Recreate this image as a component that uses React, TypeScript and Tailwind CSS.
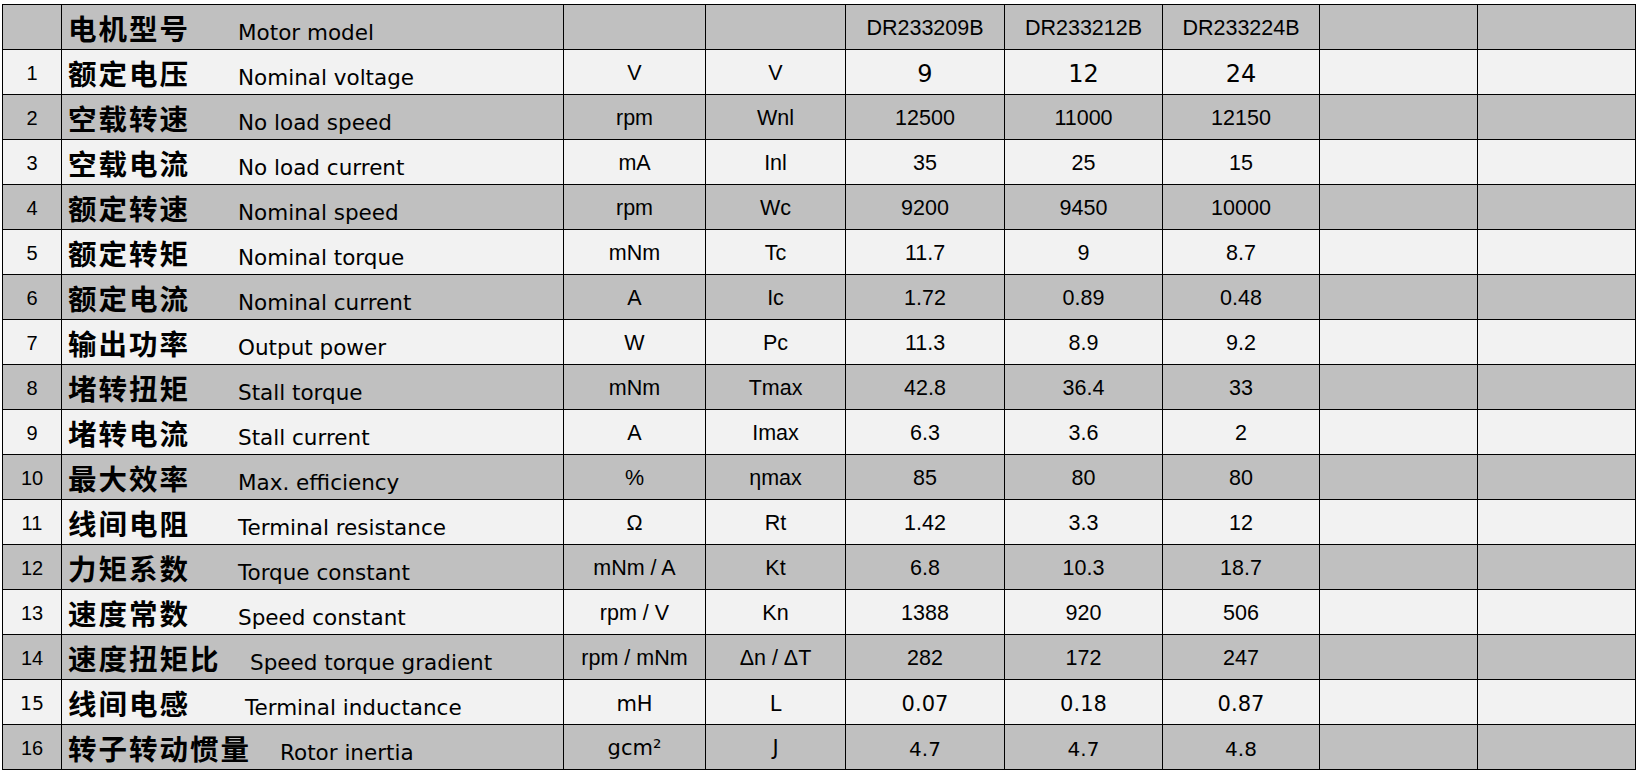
const arial = "font-['Liberation_Sans',Arial,sans-serif]";
const verdana = "font-['DejaVu_Sans',Verdana,sans-serif]";
const cjk = "font-['Noto_Sans_CJK_SC','Noto_Sans_CJK_JP',sans-serif]";

type Row = {
  n: string;
  zh: string;
  en: string;
  zhW: string;
  unit: string;
  sym: string;
  v: string[];
  numFont?: string;
  cellFont?: string;
  valFont?: string;
};

const dataRows: Row[] = [
  { n: '1', zh: '额定电压', en: 'Nominal voltage', zhW: 'w-[170px]', unit: 'V', sym: 'V', v: ['9', '12', '24'], valFont: `${verdana} text-[24px] pt-[4px]` },
  { n: '2', zh: '空载转速', en: 'No load speed', zhW: 'w-[170px]', unit: 'rpm', sym: 'Wnl', v: ['12500', '11000', '12150'] },
  { n: '3', zh: '空载电流', en: 'No load current', zhW: 'w-[170px]', unit: 'mA', sym: 'Inl', v: ['35', '25', '15'] },
  { n: '4', zh: '额定转速', en: 'Nominal speed', zhW: 'w-[170px]', unit: 'rpm', sym: 'Wc', v: ['9200', '9450', '10000'] },
  { n: '5', zh: '额定转矩', en: 'Nominal torque', zhW: 'w-[170px]', unit: 'mNm', sym: 'Tc', v: ['11.7', '9', '8.7'] },
  { n: '6', zh: '额定电流', en: 'Nominal current', zhW: 'w-[170px]', unit: 'A', sym: 'Ic', v: ['1.72', '0.89', '0.48'] },
  { n: '7', zh: '输出功率', en: 'Output power', zhW: 'w-[170px]', unit: 'W', sym: 'Pc', v: ['11.3', '8.9', '9.2'] },
  { n: '8', zh: '堵转扭矩', en: 'Stall torque', zhW: 'w-[170px]', unit: 'mNm', sym: 'Tmax', v: ['42.8', '36.4', '33'] },
  { n: '9', zh: '堵转电流', en: 'Stall current', zhW: 'w-[170px]', unit: 'A', sym: 'Imax', v: ['6.3', '3.6', '2'] },
  { n: '10', zh: '最大效率', en: 'Max. efficiency', zhW: 'w-[170px]', unit: '%', sym: 'ηmax', v: ['85', '80', '80'] },
  { n: '11', zh: '线间电阻', en: 'Terminal resistance', zhW: 'w-[170px]', unit: 'Ω', sym: 'Rt', v: ['1.42', '3.3', '12'] },
  { n: '12', zh: '力矩系数', en: 'Torque constant', zhW: 'w-[170px]', unit: 'mNm / A', sym: 'Kt', v: ['6.8', '10.3', '18.7'] },
  { n: '13', zh: '速度常数', en: 'Speed constant', zhW: 'w-[170px]', unit: 'rpm / V', sym: 'Kn', v: ['1388', '920', '506'] },
  { n: '14', zh: '速度扭矩比', en: 'Speed torque gradient', zhW: 'w-[182px]', unit: 'rpm / mNm', sym: 'Δn / ΔT', v: ['282', '172', '247'] },
  {
    n: '15', zh: '线间电感', en: 'Terminal inductance', zhW: 'w-[177px]', unit: 'mH', sym: 'L', v: ['0.07', '0.18', '0.87'],
    numFont: `${verdana} text-[19px] pt-[3px]`, cellFont: `${verdana} text-[21px] pt-[5px]`, valFont: `${verdana} text-[21px] pt-[5px]`,
  },
  {
    n: '16', zh: '转子转动惯量', en: 'Rotor inertia', zhW: 'w-[212px]', unit: 'gcm²', sym: 'J', v: ['4.7', '4.7', '4.8'],
    cellFont: `${verdana} text-[21px] pt-[4px]`, valFont: `${verdana} text-[20px] pt-[4px]`,
  },
];

const cell = 'flex items-center justify-center text-black';

function Label({ zh, en, zhW }: { zh: string; en: string; zhW: string }) {
  return (
    <div className="flex flex-1 items-center pl-[6px] pt-[2px] text-black">
      <span className={`${cjk} ${zhW} shrink-0 text-[28.5px] font-bold leading-none tracking-[2px]`}>{zh}</span>
      <span className={`${verdana} mt-[10px] whitespace-nowrap text-[21.5px] leading-none`}>{en}</span>
    </div>
  );
}

function HeaderRow() {
  const bg = 'bg-[#c0c0c0]';
  return (
    <>
      <div className={bg} />
      <div className={`${bg} flex`}>
        <Label zh="电机型号" en="Motor model" zhW="w-[170px]" />
      </div>
      <div className={bg} />
      <div className={bg} />
      {['DR233209B', 'DR233212B', 'DR233224B'].map((m) => (
        <div key={m} className={`${bg} ${cell} ${arial} pt-[2px] text-[21.5px]`}>{m}</div>
      ))}
      <div className={bg} />
      <div className={bg} />
    </>
  );
}

export default function App() {
  return (
    <div className="min-h-screen bg-white pl-[2px] pt-[4px]">
      <div className="grid w-[1634px] grid-cols-[58px_501px_141px_139px_158px_157px_156px_157px_157px] auto-rows-[44px] gap-px border border-black bg-black">
        <HeaderRow />
        {dataRows.map((r, i) => {
          const bg = i % 2 === 0 ? 'bg-[#f2f2f2]' : 'bg-[#c0c0c0]';
          const numFont = r.numFont ?? `${arial} text-[20px] pt-[2px]`;
          const cellFont = r.cellFont ?? `${arial} text-[21.5px] pt-[2px]`;
          const valFont = r.valFont ?? `${arial} text-[21.5px] pt-[2px]`;
          return (
            <div key={r.n} className="contents">
              <div className={`${bg} ${cell} ${numFont}`}>{r.n}</div>
              <div className={`${bg} flex`}>
                <Label zh={r.zh} en={r.en} zhW={r.zhW} />
              </div>
              <div className={`${bg} ${cell} ${cellFont}`}>{r.unit}</div>
              <div className={`${bg} ${cell} ${cellFont}`}>{r.sym}</div>
              {r.v.map((v, j) => (
                <div key={j} className={`${bg} ${cell} ${valFont}`}>{v}</div>
              ))}
              <div className={bg} />
              <div className={bg} />
            </div>
          );
        })}
      </div>
    </div>
  );
}
